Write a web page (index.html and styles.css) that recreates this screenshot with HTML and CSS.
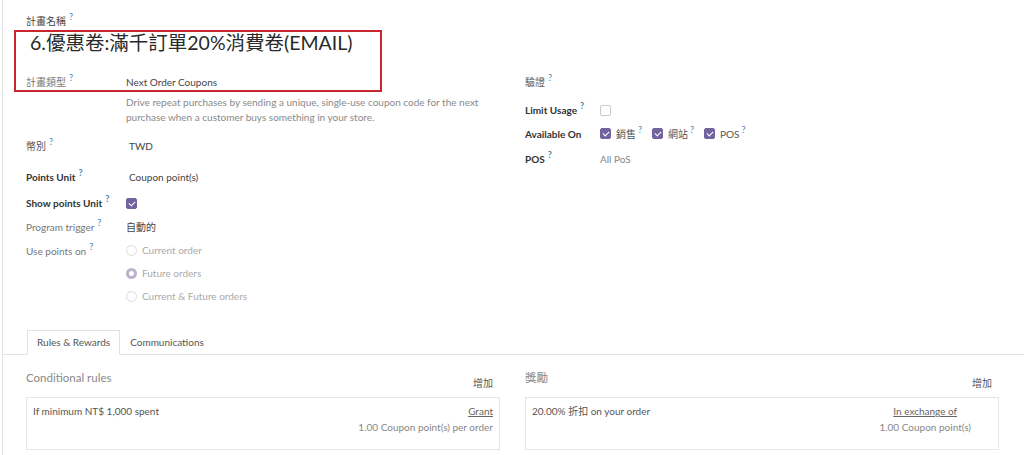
FILE: index.html
```html
<!DOCTYPE html>
<html lang="zh-Hant">
<head>
<meta charset="utf-8">
<title>計畫</title>
<link rel="stylesheet" href="styles.css">
</head>
<body>
<div class="sheet">
  <div class="top">
    <div class="name-label">計畫名稱<sup class="q">?</sup></div>
    <div class="title">6.優惠卷:滿千訂單20%消費卷(EMAIL)</div>
    <div class="groups">
      <div class="group left">
        <div class="row r-type">
          <div class="lbl">計畫類型<sup class="q">?</sup></div>
          <div class="val">
            <div>Next Order Coupons</div>
            <div class="desc">Drive repeat purchases by sending a unique, single-use coupon code for the next purchase when a customer buys something in your store.</div>
          </div>
        </div>
        <div class="row r-cur">
          <div class="lbl dark">幣別<sup class="q">?</sup></div>
          <div class="val pad">TWD</div>
        </div>
        <div class="row r-unit">
          <div class="lbl bold">Points Unit<sup class="q">?</sup></div>
          <div class="val pad">Coupon point(s)</div>
        </div>
        <div class="row r-show">
          <div class="lbl bold">Show points Unit<sup class="q">?</sup></div>
          <div class="val"><span class="cb on"></span></div>
        </div>
        <div class="row">
          <div class="lbl">Program trigger<sup class="q">?</sup></div>
          <div class="val">自動的</div>
        </div>
        <div class="row">
          <div class="lbl">Use points on<sup class="q">?</sup></div>
          <div class="val radios">
            <div class="radio"><span class="rd"></span>Current order</div>
            <div class="radio"><span class="rd sel"></span>Future orders</div>
            <div class="radio"><span class="rd"></span>Current &amp; Future orders</div>
          </div>
        </div>
      </div>
      <div class="group right">
        <div class="row r-val">
          <div class="lbl dark">驗證<sup class="q">?</sup></div>
          <div class="val"></div>
        </div>
        <div class="row r-limit">
          <div class="lbl bold">Limit Usage<sup class="q">?</sup></div>
          <div class="val"><span class="cb"></span></div>
        </div>
        <div class="row">
          <div class="lbl bold">Available On</div>
          <div class="val avail">
            <span class="opt"><span class="cb on"></span>銷售<sup class="q">?</sup></span>
            <span class="opt"><span class="cb on"></span>網站<sup class="q">?</sup></span>
            <span class="opt"><span class="cb on"></span>POS<sup class="q">?</sup></span>
          </div>
        </div>
        <div class="row r-pos">
          <div class="lbl bold">POS<sup class="q">?</sup></div>
          <div class="val muted">All PoS</div>
        </div>
      </div>
    </div>
  </div>

  <div class="tabs">
    <div class="tab active">Rules &amp; Rewards</div>
    <div class="tab">Communications</div>
  </div>

  <div class="panels">
    <div class="panel">
      <div class="panel-head">
        <div class="panel-title">Conditional rules</div>
        <div class="add">增加</div>
      </div>
      <div class="card">
        <div class="card-main">If minimum NT$ 1,000 spent</div>
        <div class="card-side">
          <div class="link">Grant</div>
          <div class="sub">1.00 Coupon point(s) per order</div>
        </div>
      </div>
    </div>
    <div class="panel">
      <div class="panel-head">
        <div class="panel-title">獎勵</div>
        <div class="add">增加</div>
      </div>
      <div class="card">
        <div class="card-main">20.00% 折扣 on your order</div>
        <div class="card-side side-r">
          <div class="link">In exchange of</div>
          <div class="sub">1.00 Coupon point(s)</div>
        </div>
      </div>
    </div>
  </div>

  <div class="highlight"></div>
</div>
</body>
</html>
```

FILE: styles.css
```css
* { box-sizing: border-box; }
html, body { margin: 0; padding: 0; background: #fff; }
body {
  font-family: Lato, "Noto Sans CJK TC", sans-serif;
  font-size: 10px;
  color: #4c4c4c;
  padding-left: 2px;
  height: 455px;
  overflow: hidden;
}
.sheet {
  position: relative;
  border-left: 1px solid #e3e3e3;
  min-height: 455px;
}
.top { padding: 14px 25px 0 23px; }
.name-label { font-size: 10px; line-height: 14px; color: #444; }
.title {
  font-size: 19.5px;
  line-height: 26px;
  color: #2a2a2a;
  padding-left: 4px;
  margin-top: 2px;
}
sup.q {
  color: #3f86b0;
  font-size: 9px;
  vertical-align: baseline;
  position: relative;
  top: -5px;
  margin-left: 3px;
  line-height: 0;
}
.groups {
  display: grid;
  grid-template-columns: 499px 1fr;
  margin-top: 14px;
}
.row {
  display: grid;
  grid-template-columns: 100px 1fr;
  align-items: start;
  line-height: 24px;
}
.right .row { grid-template-columns: 75px 1fr; }
.lbl { color: #777; white-space: nowrap; }
.lbl.dark { color: #555; }
.lbl.bold { color: #333; font-weight: 700; }
.val { color: #444; min-height: 24px; }
.val.pad { padding-left: 3px; }
.desc { color: #8a8a8a; line-height: 15px; margin-top: 1px; width: 372px; }
.r-type { margin-bottom: 9px; }
.r-cur { margin-bottom: 7px; }
.r-unit { margin-bottom: 2px; }
.r-val { margin-bottom: 4px; }
.r-pos { margin-top: 1px; }
.val .cb { vertical-align: middle; margin-top: -2px; }
.cb {
  display: inline-block;
  width: 11px;
  height: 11px;
  border: 1px solid #c9c9c9;
  border-radius: 2px;
  background: #fff;
  position: relative;
}
.cb.on { background: #71639e; border-color: #71639e; }
.cb.on::after {
  content: "";
  position: absolute;
  left: 3px;
  top: 1px;
  width: 3px;
  height: 5px;
  border: solid #fff;
  border-width: 0 1.5px 1.5px 0;
  transform: rotate(45deg);
}
.avail { display: flex; gap: 10px; }
.opt { display: inline-flex; align-items: center; gap: 5px; color: #555; }
.opt sup.q { top: -4px; margin-left: -3px; }
.muted { color: #888; }
.radios { color: #aaa; }
.radio { display: flex; align-items: center; gap: 5px; line-height: 23px; }
.rd {
  width: 11px;
  height: 11px;
  border-radius: 50%;
  border: 1px solid #dcdcdc;
  background: #fff;
}
.rd.sel { border: 3px solid #b9b2cd; background: #fff; }
.tabs {
  display: flex;
  margin-top: 22px;
  padding-left: 24px;
  border-bottom: 1px solid #e2e2e2;
}
.tab {
  padding: 0 9px;
  line-height: 23px;
  color: #555;
  border: 1px solid transparent;
  border-bottom: 0;
  margin-bottom: -1px;
}
.tab.active {
  border-color: #e2e2e2;
  background: #fff;
  border-bottom: 1px solid #fff;
}
.panels {
  display: grid;
  grid-template-columns: 474px 474px;
  column-gap: 25px;
  padding-left: 23px;
  margin-top: 14px;
}
.panel-head {
  display: flex;
  justify-content: space-between;
  align-items: flex-start;
  padding-right: 7px;
}
.panel-title { font-size: 11.5px; line-height: 18px; color: #888; }
.add { font-size: 10px; color: #555; margin-top: 7px; line-height: 14px; }
.card {
  margin-top: 7px;
  height: 53px;
  border: 1px solid #e6e6e6;
  padding: 5px 6px;
  display: flex;
  justify-content: space-between;
  line-height: 16px;
}
.card-main { color: #555; }
.card-side { text-align: right; color: #888; }
.side-r { text-align: center; padding-right: 21px; }
.link { text-decoration: underline; color: #666; }
.highlight {
  position: absolute;
  left: 11px;
  top: 30px;
  width: 368px;
  height: 62px;
  border: 2px solid #c8262c;
  pointer-events: none;
}
```
